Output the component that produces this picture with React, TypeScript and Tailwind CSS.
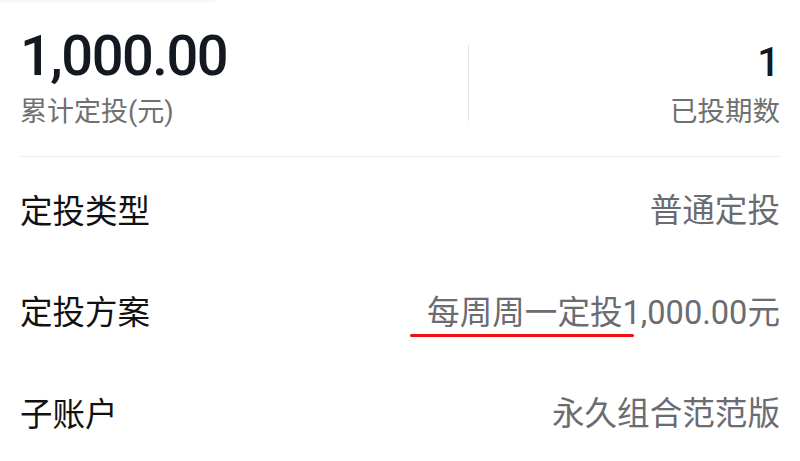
const cjk = "font-['Roboto','Noto_Sans_CJK_SC',sans-serif]";

const Row = ({
  label,
  value,
  mark,
}: {
  label: string;
  value: React.ReactNode;
  mark?: boolean;
}) => {
  return (
    <div className="flex h-[101.5px] items-center justify-between">
      <span className="text-[32.5px] leading-none text-[#111111]">{label}</span>
      <span className="relative text-[32.6px] leading-none text-[#6b6b72]">
        {value}
        {mark && (
          <span className="absolute left-[-17px] top-[37px] h-[3px] w-[224px] rounded-full bg-[#f01010]" />
        )}
      </span>
    </div>
  );
};

export default function App() {
  return (
    <div className={`h-[461px] w-[800px] overflow-hidden bg-white ${cjk}`}>
      <div className="h-[3px] w-[215px] bg-[#fbf9f3]" />
      <div className="px-[20px]">
        <div className="flex h-[154px] items-start border-b border-[#ededed]">
          <div className="flex w-[448px] flex-col pt-[25px]">
            <span className="text-[56px] font-medium leading-none tracking-[-1.5px] text-[#141821]">
              1,000.00
            </span>
            <span className="mt-[15px] text-[27px] leading-none text-[#707070]">
              累计定投(元)
            </span>
          </div>
          <div className="mt-[42px] h-[76px] w-px bg-[#e3e3e3]" />
          <div className="flex flex-1 flex-col items-end pt-[40px]">
            <span className="text-[40px] font-medium leading-none text-[#141821]">1</span>
            <span className="mt-[15px] text-[27.5px] leading-none text-[#707070]">已投期数</span>
          </div>
        </div>
        <div className="pt-[4px]">
          <Row label="定投类型" value="普通定投" />
          <Row label="定投方案" value="每周周一定投1,000.00元" mark />
          <Row label="子账户" value="永久组合范范版" />
        </div>
      </div>
    </div>
  );
}
